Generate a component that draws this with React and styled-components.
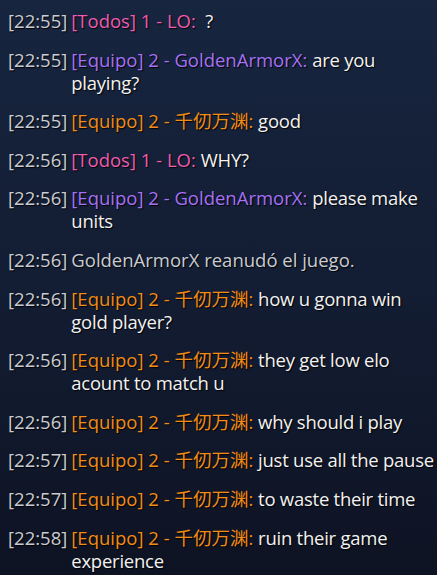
import React from "react";
import styled, { createGlobalStyle } from "styled-components";

const GlobalStyle = createGlobalStyle`
  html, body {
    margin: 0;
    padding: 0;
    background: #0e1323;
  }
`;

const ChatLog = styled.div`
  width: 437px;
  height: 575px;
  box-sizing: border-box;
  overflow: hidden;
  padding: 9px 0 0 8px;
  background: linear-gradient(180deg, #17253f 0%, #131d33 50%, #0e1323 100%);
  font-family: "Open Sans", "Noto Sans CJK SC", sans-serif;
  font-size: 18.5px;
  line-height: 23px;
  display: flex;
  flex-direction: column;
  gap: 15.6px;
  text-shadow: 1px 1px 1px rgba(0, 0, 0, 0.9);
`;

const Line = styled.div`
  display: flex;
  gap: 4px;
`;

const Time = styled.span`
  flex: none;
  color: #c9ccd2;
  white-space: nowrap;
`;

const Body = styled.div`
  flex: 1;
  color: #f2f2f2;
`;

const channelColors = {
  todos: "#ee5bb0",
  team: "#a571f5",
  enemy: "#f28c16",
};

const Sender = styled.span`
  color: ${({ $tone }) => channelColors[$tone]};
`;

const Text = styled.span`
  letter-spacing: -0.25px;
`;

const System = styled.span`
  color: #c9ccd2;
`;

const messages = [
  { t: "22:55", tone: "todos", who: "[Todos] 1 - LO:", text: "\u00a0?" },
  { t: "22:55", tone: "team", who: "[Equipo] 2 - GoldenArmorX:", text: "are you playing?" },
  { t: "22:55", tone: "enemy", who: "[Equipo] 2 - 千仞万渊:", text: "good" },
  { t: "22:56", tone: "todos", who: "[Todos] 1 - LO:", text: "WHY?" },
  { t: "22:56", tone: "team", who: "[Equipo] 2 - GoldenArmorX:", text: "please make units" },
  { t: "22:56", system: "GoldenArmorX reanudó el juego." },
  { t: "22:56", tone: "enemy", who: "[Equipo] 2 - 千仞万渊:", text: "how u gonna win gold player?" },
  { t: "22:56", tone: "enemy", who: "[Equipo] 2 - 千仞万渊:", text: "they get low elo acount to match u" },
  { t: "22:56", tone: "enemy", who: "[Equipo] 2 - 千仞万渊:", text: "why should i play" },
  { t: "22:57", tone: "enemy", who: "[Equipo] 2 - 千仞万渊:", text: "just use all the pause" },
  { t: "22:57", tone: "enemy", who: "[Equipo] 2 - 千仞万渊:", text: "to waste their time" },
  { t: "22:58", tone: "enemy", who: "[Equipo] 2 - 千仞万渊:", text: "ruin their game experience" },
];

export default function App() {
  return (
    <>
      <GlobalStyle />
      <ChatLog>
        {messages.map((m, i) => (
          <Line key={i}>
            <Time>[{m.t}]</Time>
            <Body>
              {m.system ? (
                <System>{m.system}</System>
              ) : (
                <>
                  <Sender $tone={m.tone}>{m.who}</Sender> <Text>{m.text}</Text>
                </>
              )}
            </Body>
          </Line>
        ))}
      </ChatLog>
    </>
  );
}
